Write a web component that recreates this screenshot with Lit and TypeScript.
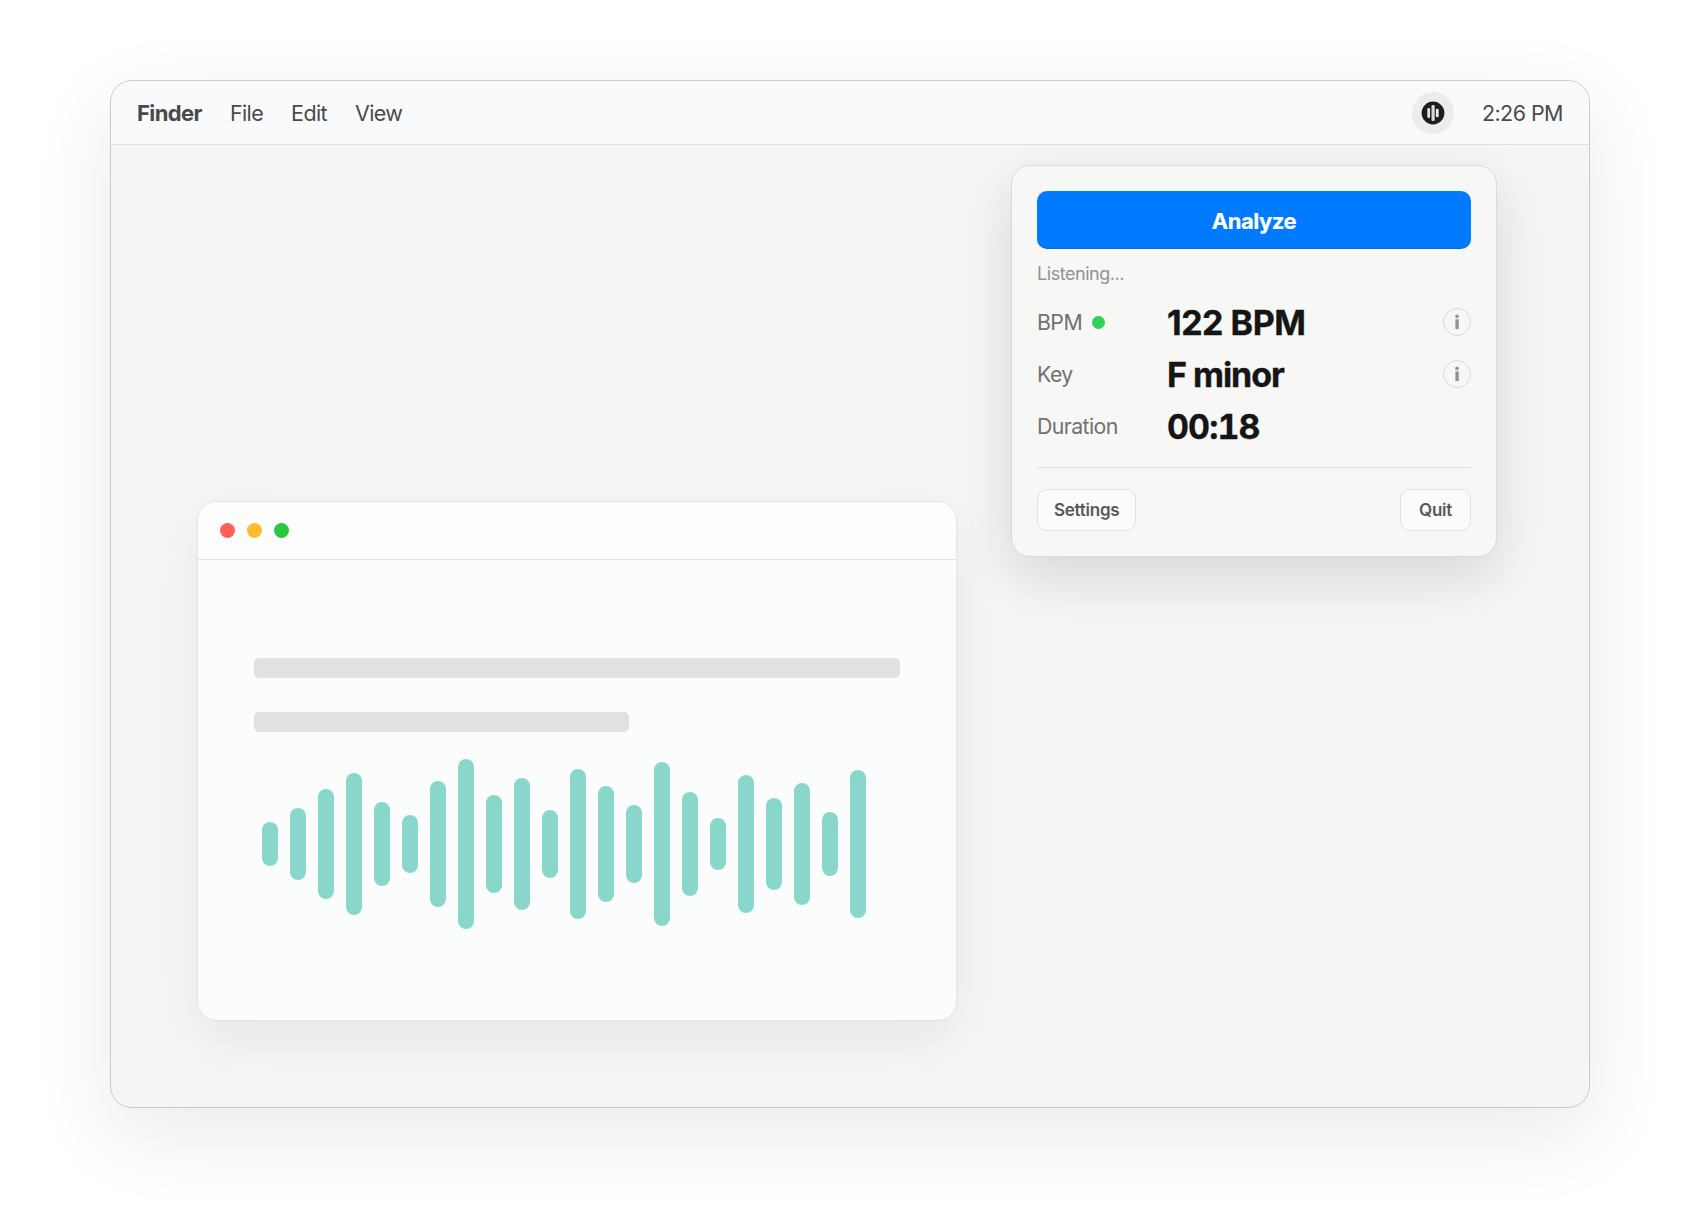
import { LitElement, html, css, svg } from "lit";
import { customElement } from "lit/decorators.js";

const BAR_HEIGHTS = [44, 72, 110, 142, 84, 58, 126, 170, 98, 132, 68, 150, 116, 78, 164, 104, 52, 138, 92, 122, 64, 148];

@customElement("menu-bar")
class MenuBar extends LitElement {
  static styles = css`
    :host { display: block; }
    .bar {
      box-sizing: border-box;
      height: 64px;
      padding: 0 26px;
      display: flex;
      align-items: center;
      justify-content: space-between;
      background: #f9fafc;
      border-bottom: 1px solid #dfe1e3;
      font-size: 21.5px;
      letter-spacing: -0.62px;
      color: #4a4a4a;
    }
    .group { display: flex; align-items: center; gap: 28px; }
    .app { font-size: 22px; font-weight: 700; letter-spacing: -0.6px; }
    .time { letter-spacing: -0.55px; }
    .status {
      width: 42px;
      height: 42px;
      border-radius: 50%;
      background: #ebecee;
      display: flex;
      align-items: center;
      justify-content: center;
    }
    .glyph { display: block; }
  `;
  render() {
    return html`
      <div class="bar">
        <div class="group">
          <span class="app">Finder</span><span>File</span><span>Edit</span><span>View</span>
        </div>
        <div class="group">
          <span class="status">
            <svg class="glyph" width="24" height="24" viewBox="0 0 24 24">
              <circle cx="12" cy="12" r="11.4" fill="#1d1d1d" />
              <rect x="6.3" y="7" width="2.8" height="10" rx="1.2" fill="#e2e2e3" />
              <rect x="10.5" y="4" width="3.2" height="16" rx="1.3" fill="#d8d8da" />
              <rect x="14.8" y="7.8" width="2.9" height="8.4" rx="1.2" fill="#e8e8ea" />
            </svg>
          </span>
          <span class="time">2:26 PM</span>
        </div>
      </div>
    `;
  }
}

@customElement("audio-window")
class AudioWindow extends LitElement {
  static styles = css`
    :host { display: block; }
    .window {
      box-sizing: border-box;
      width: 760px;
      height: 520px;
      border: 1px solid #e3e5e5;
      border-radius: 20px;
      background: #fbfdfc;
      box-shadow: 0 20px 56px rgba(20, 20, 8, 0.06);
      overflow: hidden;
    }
    .title {
      box-sizing: border-box;
      height: 58px;
      padding: 0 22px;
      display: flex;
      align-items: center;
      gap: 12px;
      background: #fdfdfd;
      border-bottom: 1px solid #e3e5e5;
    }
    .dot { width: 15px; height: 15px; border-radius: 50%; }
    .red { background: #ff5f57; }
    .amber { background: #febc2e; }
    .green { background: #28c840; }
    .body { padding: 98px 56px 0; display: flex; flex-direction: column; }
    .line { height: 20px; border-radius: 5px; background: #e1e1e1; margin-bottom: 34px; }
    .short { width: 58%; margin-bottom: 0; }
    .wave {
      height: 170px;
      margin-top: 27px;
      padding: 0 8px;
      display: flex;
      align-items: center;
      gap: 12px;
    }
    .tone { flex: none; width: 16px; border-radius: 8px; background: #89d7ca; }
  `;
  render() {
    return html`
      <div class="window">
        <div class="title">
          <span class="dot red"></span><span class="dot amber"></span><span class="dot green"></span>
        </div>
        <div class="body">
          <div class="line"></div>
          <div class="line short"></div>
          <div class="wave">
            ${BAR_HEIGHTS.map((h) => html`<span class="tone" style="height:${h}px"></span>`)}
          </div>
        </div>
      </div>
    `;
  }
}

@customElement("analysis-panel")
class AnalysisPanel extends LitElement {
  static styles = css`
    :host { display: block; }
    .panel {
      box-sizing: border-box;
      width: 486px;
      height: 392px;
      padding: 25px;
      border: 1px solid #d9dada;
      border-radius: 19px;
      background: #f7f7f5;
      box-shadow: 0 20px 56px rgba(10, 10, 4, 0.12);
      display: flex;
      flex-direction: column;
    }
    .analyze {
      box-sizing: border-box;
      height: 58px;
      padding-top: 1px;
      border-radius: 10px;
      background: #007aff;
      box-shadow: inset 0 -1px 0 rgba(0, 0, 0, 0.1);
      color: #fff;
      font-size: 22px;
      font-weight: 700;
      letter-spacing: -0.44px;
      -webkit-text-stroke: 0.2px #fff;
      display: flex;
      align-items: center;
      justify-content: center;
    }
    .note {
      margin-top: 13px;
      height: 24px;
      line-height: 24px;
      font-size: 18px;
      letter-spacing: -0.45px;
      color: #929292;
    }
    .rows { margin-top: 10px; display: flex; flex-direction: column; }
    .row {
      height: 52px;
      display: grid;
      grid-template-columns: 130px 1fr 28px;
      align-items: center;
    }
    .label {
      display: flex;
      align-items: center;
      gap: 10px;
      font-size: 21.3px;
      letter-spacing: -0.58px;
      color: #717171;
    }
    .live { width: 13px; height: 13px; border-radius: 50%; background: #30d158; }
    .value {
      padding-top: 2px;
      font-size: 34px;
      line-height: 40px;
      font-weight: 700;
      letter-spacing: -1.05px;
      -webkit-text-stroke: 0.35px #151515;
      color: #151515;
    }
    .tempo { letter-spacing: -0.48px; }
    .clock { letter-spacing: -0.9px; font-variant-numeric: tabular-nums; }
    .info { display: block; }
    .footer {
      margin-top: 15px;
      border-top: 1px solid #dcdddc;
      padding-top: 21px;
      display: flex;
      justify-content: space-between;
    }
    .button {
      box-sizing: border-box;
      height: 42px;
      padding: 0 16px;
      border: 1px solid #e1e1e1;
      border-radius: 10px;
      background: #fbfbfb;
      font-size: 17px;
      font-weight: 600;
      letter-spacing: -0.25px;
      color: #585858;
      display: flex;
      align-items: center;
    }
    .quit { padding: 0 18px; }
  `;
  info() {
    return svg`
      <svg class="info" width="28" height="28" viewBox="0 0 28 28">
        <circle cx="14" cy="14" r="13.5" fill="none" stroke="#dadada" />
        <circle cx="14" cy="8.4" r="1.8" fill="#929292" />
        <rect x="12.4" y="11.3" width="3.4" height="9.8" fill="#929292" />
      </svg>`;
  }
  render() {
    return html`
      <div class="panel">
        <div class="analyze">Analyze</div>
        <div class="note">Listening...</div>
        <div class="rows">
          <div class="row">
            <span class="label">BPM<span class="live"></span></span>
            <span class="value tempo">122 BPM</span>${this.info()}
          </div>
          <div class="row">
            <span class="label">Key</span>
            <span class="value">F minor</span>${this.info()}
          </div>
          <div class="row">
            <span class="label">Duration</span>
            <span class="value clock">00:18</span>
          </div>
        </div>
        <div class="footer">
          <span class="button">Settings</span>
          <span class="button quit">Quit</span>
        </div>
      </div>
    `;
  }
}

@customElement("app-root")
class AppRoot extends LitElement {
  static styles = css`
    :host {
      display: block;
      box-sizing: border-box;
      width: 1700px;
      height: 1220px;
      padding: 80px 110px;
      background: #fff;
      overflow: hidden;
      font-family: Inter, "Liberation Sans", sans-serif;
    }
    .screen {
      box-sizing: border-box;
      position: relative;
      height: 1028px;
      border: 1px solid #c9cacb;
      border-radius: 22px;
      background: #f3f5f7;
      box-shadow: 0 26px 84px rgba(26, 26, 8, 0.09);
      overflow: hidden;
    }
    .audio { position: absolute; left: 86px; top: 420px; }
    .popover { position: absolute; left: 900px; top: 84px; }
  `;
  render() {
    return html`
      <div class="screen">
        <menu-bar></menu-bar>
        <audio-window class="audio"></audio-window>
        <analysis-panel class="popover"></analysis-panel>
      </div>
    `;
  }
}
